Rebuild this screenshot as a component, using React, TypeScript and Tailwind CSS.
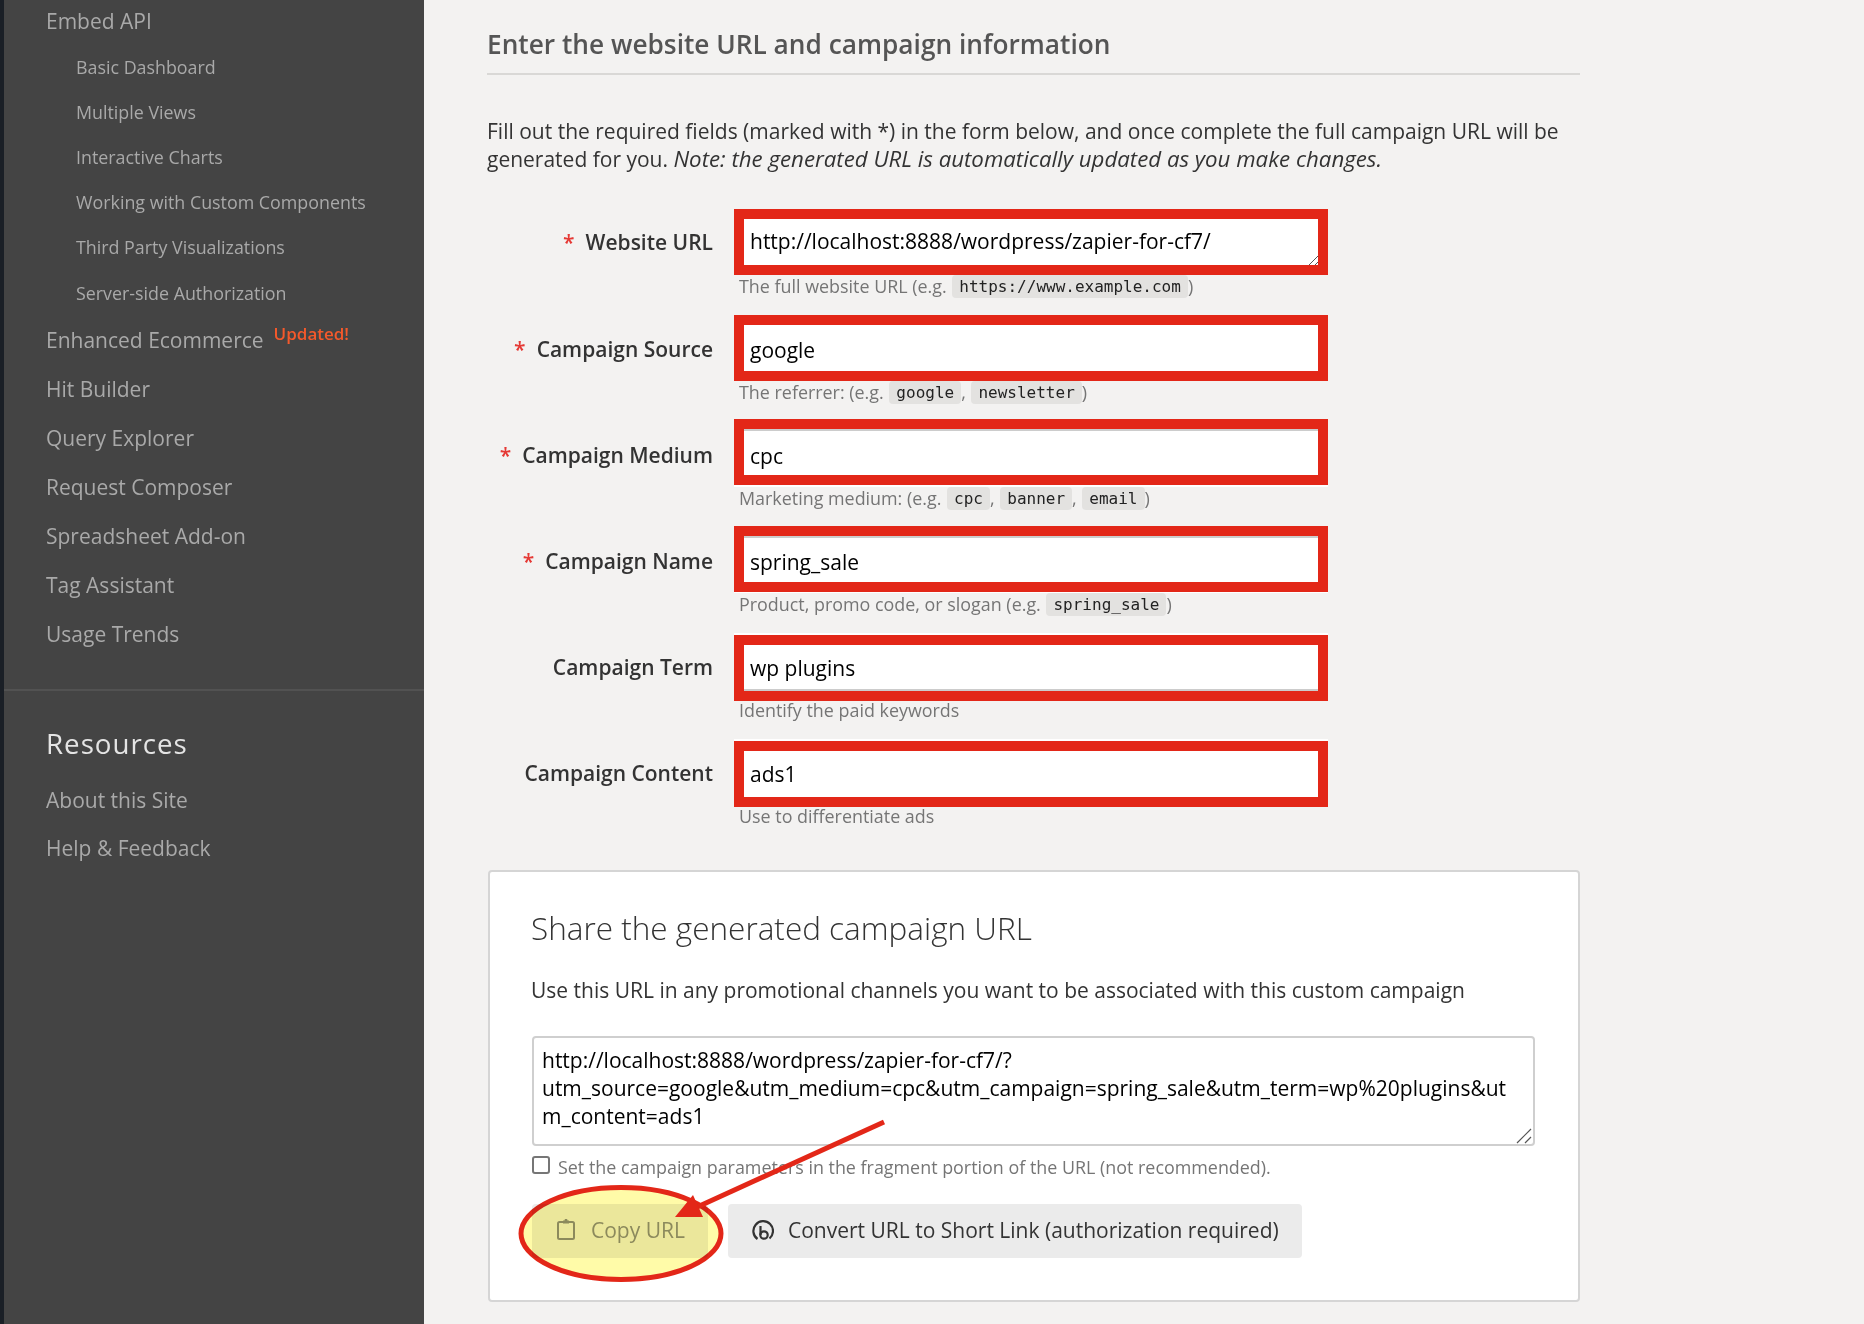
const openSans = { fontFamily: '"Open Sans", "Liberation Sans", sans-serif' };

const subItems = [
  { label: "Basic Dashboard", h: "h-[46px]" },
  { label: "Multiple Views", h: "h-[44px]" },
  { label: "Interactive Charts", h: "h-[46px]" },
  { label: "Working with Custom Components", h: "h-[44px]" },
  { label: "Third Party Visualizations", h: "h-[46px]" },
  { label: "Server-side Authorization", h: "h-[46px]" },
];

const topItems = [
  "Hit Builder",
  "Query Explorer",
  "Request Composer",
  "Spreadsheet Add-on",
  "Tag Assistant",
  "Usage Trends",
];

function Chip({ children }: { children: string }) {
  return (
    <code className="ml-[1px] inline-block h-[23px] rounded-[4px] bg-[#e3e2e0] px-[7px] font-['DejaVu_Sans_Mono',monospace] text-[16px] leading-[23px] text-[#222]">
      {children}
    </code>
  );
}

function Field({
  label,
  value,
  required,
  grip,
  frame,
  hint,
}: {
  label: string;
  value: string;
  required?: boolean;
  grip?: boolean;
  frame: string;
  hint: React.ReactNode;
}) {
  return (
    <div className="flex h-[106px]">
      <div
        className={`flex h-[66px] w-[226px] items-center justify-end text-[21px] font-semibold text-[#333] ${
          grip ? "pt-[2px]" : "pt-[4px]"
        }`}
      >
        {required && <span className="mr-[11px] text-[#e53935]">*</span>}
        {label}
      </div>
      <div className="ml-[21px] w-[594px]">
        <div
          className={`relative h-[66px] bg-white pl-[16px] text-[21px] text-black ${
            grip ? "leading-[65px]" : "pt-[2px] leading-[66px]"
          }`}
        >
          {value}
          {grip && (
            <svg className="absolute bottom-[10px] right-[10px]" width="12" height="12" viewBox="0 0 12 12">
              <path d="M3 12 L12 3 M9 12 L12 9" stroke="#555" strokeWidth="1" />
            </svg>
          )}
          {/* red annotation box drawn over the input, slightly off per row */}
          <div className={`absolute inset-x-0 h-[66px] border-[10px] border-[#e32718] ${frame}`} />
        </div>
        <div className="ml-[5px] flex h-[22px] items-center whitespace-pre text-[17.9px] text-[#757575]">
          {hint}
        </div>
      </div>
    </div>
  );
}

export default function App() {
  return (
    <div className="flex h-[1324px] overflow-hidden bg-[#f3f2f1]" style={openSans}>
      <aside className="h-full w-[424px] shrink-0 border-l-[4px] border-[#1a1f26] bg-[#444444] text-[#a9a9a9]">
        <div className="pl-[42px]">
          <div className="flex h-[44px] items-center text-[21px]">Embed API</div>
          <div className="pl-[30px] text-[17.85px]">
            {subItems.map((s) => (
              <div key={s.label} className={`flex items-center ${s.h}`}>
                {s.label}
              </div>
            ))}
          </div>
          <div className="flex h-[49px] items-center text-[21px]">
            Enhanced Ecommerce
            <span className="relative top-[-7px] ml-[10px] text-[17px] font-semibold text-[#f4592b]">
              Updated!
            </span>
          </div>
          {topItems.map((t) => (
            <div key={t} className="flex h-[49px] items-center text-[21px]">
              {t}
            </div>
          ))}
        </div>
        <div className="mt-[30px] h-[2px] bg-[#525252]" />
        <div className="pl-[42px]">
          <div className="mt-[32px] flex h-[42px] items-center text-[27.7px] tracking-[1px] text-[#e4e4e4]">
            Resources
          </div>
          <div className="mt-[12px] flex h-[48px] items-center text-[21px]">About this Site</div>
          <div className="flex h-[48px] items-center text-[21px]">Help &amp; Feedback</div>
        </div>
      </aside>

      <main className="relative ml-[63px] w-[1093px]">
        <h2 className="flex h-[75px] items-center border-b-2 border-[#d9d8d6] pt-[17px] text-[26.25px] font-semibold text-[#555]">
          Enter the website URL and campaign information
        </h2>
        <p className="mt-[42px] text-[21px] leading-[28px] text-[#333]">
          Fill out the required fields (marked with *) in the form below, and once complete the full
          campaign URL will be generated for you.{" "}
          <em className="text-[22.25px] leading-none">
            Note: the generated URL is automatically updated as you make changes.
          </em>
        </p>
        <div className="mt-[36px]">
          <Field
            required
            grip
            frame="top-0"
            label="Website URL"
            value="http://localhost:8888/wordpress/zapier-for-cf7/"
            hint={
              <>
                The full website URL (e.g. <Chip>https://www.example.com</Chip>)
              </>
            }
          />
          <Field
            required
            frame="top-0"
            label="Campaign Source"
            value="google"
            hint={
              <>
                The referrer: (e.g. <Chip>google</Chip>, <Chip>newsletter</Chip>)
              </>
            }
          />
          <Field
            required
            frame="top-[-2px] shadow-[inset_0_2px_0_#cccccc]"
            label="Campaign Medium"
            value="cpc"
            hint={
              <>
                Marketing medium: (e.g. <Chip>cpc</Chip>, <Chip>banner</Chip>, <Chip>email</Chip>)
              </>
            }
          />
          <Field
            required
            frame="top-[-1px] shadow-[inset_0_2px_0_#cccccc]"
            label="Campaign Name"
            value="spring_sale"
            hint={
              <>
                Product, promo code, or slogan (e.g. <Chip>spring_sale</Chip>)
              </>
            }
          />
          <Field
            frame="top-[2px] shadow-[inset_0_-2px_0_#cccccc]"
            label="Campaign Term"
            value="wp plugins"
            hint="Identify the paid keywords"
          />
          <Field frame="top-[2px]" label="Campaign Content" value="ads1" hint="Use to differentiate ads" />
        </div>

        <section className="relative ml-[1px] mt-[25px] h-[432px] rounded-[4px] border-2 border-[#d5d5d5] bg-white pl-[42px] pr-[43px]">
          <h3 className="-ml-[1px] mt-[34px] flex h-[44px] items-center text-[31.5px] font-light text-[#333]">
            Share the generated campaign URL
          </h3>
          <p className="-ml-[1px] mt-[26px] text-[21px] leading-[28px] text-[#333]">
            Use this URL in any promotional channels you want to be associated with this custom campaign
          </p>
          <div className="relative mt-[32px] h-[110px] rounded-[4px] border-2 border-[#cfcfcf] bg-white px-[8px] py-[8px] text-[21px] leading-[28px] text-black">
            http://localhost:8888/wordpress/zapier-for-cf7/?
            <br />
            utm_source=google&amp;utm_medium=cpc&amp;utm_campaign=spring_sale&amp;utm_term=wp%20plugins&amp;ut
            <br />
            m_content=ads1
            <svg className="absolute bottom-0 right-0" width="18" height="18" viewBox="0 0 18 18">
              <path d="M2 17 L16 3 M10 17 L16 11" stroke="#555" strokeWidth="1.2" />
            </svg>
          </div>
          <label className="mt-[8px] flex h-[26px] items-center text-[17.9px] text-[#757575]">
            <span className="relative top-[-2px] h-[18px] w-[18px] rounded-[3px] border-2 border-[#767676] bg-white" />
            <span className="ml-[8px]">
              Set the campaign parameters in the fragment portion of the URL (not recommended).
            </span>
          </label>
          <div className="mt-[24px] flex gap-[20px]">
            <button className="flex h-[54px] w-[176px] items-center rounded-[4px] bg-[#ebebeb] pl-[25px] text-[21px] text-[#8c8c8c]">
              <svg className="mb-[3px]" width="18" height="21" viewBox="0 0 18 21" fill="none" stroke="currentColor" strokeWidth="2">
                <rect x="1" y="3" width="16" height="17" rx="1.5" />
                <path d="M6 4 V2 H8 V0.5 H10 V2 H12 V4 Z" fill="currentColor" strokeWidth="1" />
              </svg>
              <span className="ml-[16px]">Copy URL</span>
            </button>
            <button className="flex h-[54px] w-[574px] items-center rounded-[4px] bg-[#ebebeb] pl-[24px] text-[21px] text-[#333]">
              <svg width="22" height="22" viewBox="0 0 22 22" fill="none" stroke="#333" strokeWidth="2.2">
                <path d="M5.5 19 A9.8 9.8 0 1 1 17.5 18.5" />
                <path d="M8.5 6 V15" />
                <circle cx="12" cy="15" r="3.7" />
              </svg>
              <span className="ml-[14px]">Convert URL to Short Link (authorization required)</span>
            </button>
          </div>
        </section>

        {/* hand-drawn highlight and arrow, page coordinates minus main's origin (487,0) */}
        <svg className="pointer-events-none absolute left-0 top-0" width="1093" height="1324" viewBox="487 0 1093 1324">
          <ellipse
            cx="621"
            cy="1233.5"
            rx="100"
            ry="46"
            fill="#fff200"
            fillOpacity="0.34"
            stroke="#e32718"
            strokeWidth="5"
            style={{ mixBlendMode: "multiply" }}
          />
          <path d="M884 1122 L695 1208" stroke="#e32718" strokeWidth="5" />
          <path d="M675 1217 L693 1195 L703 1217 Z" fill="#e32718" />
        </svg>
      </main>
    </div>
  );
}
